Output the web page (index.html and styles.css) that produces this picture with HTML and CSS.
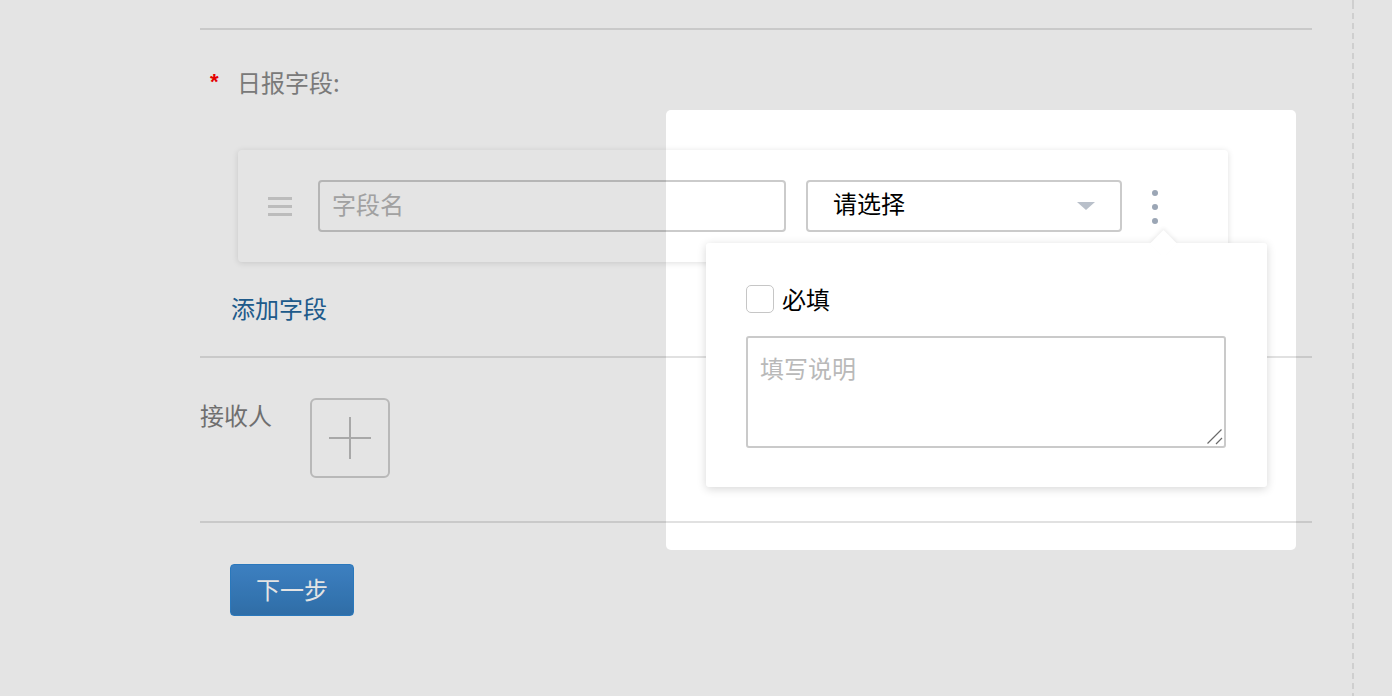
FILE: index.html
```html
<!DOCTYPE html>
<html lang="zh-CN">
<head>
<meta charset="utf-8">
<title>日报设置</title>
<link rel="stylesheet" href="styles.css">
</head>
<body>
<div class="page">
  <main class="main">
    <div class="rule"></div>
    <section class="fields">
      <div class="field-label"><span class="req">*</span><span>日报字段:</span></div>
      <div class="field-card">
        <span class="handle"><i></i><i></i><i></i></span>
        <input class="text-input" type="text" placeholder="字段名">
        <div class="select"><span class="select-text">请选择</span><span class="caret"></span></div>
        <span class="more"><i></i><i></i><i></i></span>
        <div class="popover">
          <label class="check"><span class="box"></span><span>必填</span></label>
          <div class="desc-wrap">
            <textarea class="desc" placeholder="填写说明"></textarea>
            <svg class="grip" width="16" height="16" viewBox="0 0 16 16"><path d="M0.5 14.5L14.5 0.5M9 15L15 9" stroke="#6a6a6a" stroke-width="1.2" fill="none"/></svg>
          </div>
        </div>
      </div>
      <a class="add-field">添加字段</a>
    </section>
    <div class="rule"></div>
    <section class="receivers">
      <span class="recv-label">接收人</span>
      <span class="add-recv">
        <svg width="42" height="42" viewBox="0 0 42 42"><path d="M21 0V42M0 21H42" stroke="#bcbcbc" stroke-width="2" fill="none"/></svg>
      </span>
    </section>
    <div class="rule"></div>
    <div class="actions"><span class="btn-primary">下一步</span></div>
  </main>
  <div class="divider"></div>
</div>
<div class="spotlight"></div>
</body>
</html>
```
FILE: styles.css
```css
* { box-sizing: border-box; }
html, body { margin: 0; height: 100%; }
body {
  background: #fff;
  font-family: "Noto Sans CJK SC", "Noto Sans", sans-serif;
  overflow: hidden;
}
.page { display: flex; height: 696px; }
.main { margin-left: 200px; width: 1112px; padding-top: 28px; }
.rule { height: 2px; background: #e1e1e1; }

.field-label {
  display: flex;
  align-items: center;
  margin-top: 37px;
  height: 30px;
  font-size: 24px;
  line-height: 30px;
  color: #898989;
}
.req {
  width: 37px;
  padding-left: 10px;
  color: #f00;
  font-family: "Liberation Sans", sans-serif;
  font-size: 22px;
  font-weight: bold;
  line-height: 30px;
}

.field-card {
  position: relative;
  display: flex;
  align-items: center;
  margin: 53px 0 0 38px;
  width: 990px;
  height: 112px;
  padding: 0 30px;
  background: #fff;
  border-radius: 4px;
  box-shadow: 0 1px 6px rgba(0, 0, 0, 0.13);
}
.handle { display: flex; flex-direction: column; gap: 5px; width: 24px; margin-right: 26px; }
.handle i { display: block; height: 3px; background: #d3d3d3; }
.text-input {
  width: 468px;
  height: 52px;
  border: 2px solid #cbcbcb;
  border-radius: 4px;
  padding: 0 12px 6px;
  font: 24px/1.2 "Noto Sans CJK SC", sans-serif;
  outline: none;
  background: #fff;
}
.text-input::placeholder { color: #b4b4b4; }
.select {
  display: flex;
  align-items: center;
  justify-content: space-between;
  width: 316px;
  height: 52px;
  margin-left: 20px;
  border: 2px solid #cbcbcb;
  border-radius: 4px;
  padding: 0 25px;
  font-size: 24px;
  line-height: 30px;
  color: #000;
}
.select-text { padding-bottom: 6px; }
.caret {
  width: 0;
  height: 0;
  border-left: 9px solid transparent;
  border-right: 9px solid transparent;
  border-top: 8px solid #b9c0ca;
}
.more { display: flex; flex-direction: column; gap: 8px; margin-left: 30px; margin-top: 1px; }
.more i { display: block; width: 6px; height: 6px; border-radius: 50%; background: #9ba6b5; }

.popover {
  position: absolute;
  left: 468px;
  top: 93px;
  width: 561px;
  height: 244px;
  padding: 42px 40px 0;
  background: #fff;
  border-radius: 3px;
  box-shadow: 0 2px 10px rgba(0, 0, 0, 0.16);
  z-index: 20;
}
.popover::before {
  content: "";
  position: absolute;
  left: 448px;
  top: -9.5px;
  width: 19px;
  height: 19px;
  background: #fff;
  transform: rotate(45deg);
  box-shadow: -2px -2px 4px rgba(0, 0, 0, 0.06);
}
.check {
  position: relative;
  display: flex;
  align-items: center;
  gap: 8px;
  height: 28px;
  font-size: 24px;
  line-height: 30px;
  color: #000;
}
.box {
  width: 28px;
  height: 28px;
  border: 1.5px solid #c6c6c6;
  border-radius: 5px;
  background: #fff;
}
.desc-wrap { position: relative; margin-top: 23px; width: 480px; height: 112px; }
.desc {
  display: block;
  width: 100%;
  height: 100%;
  border: 2px solid #cacaca;
  border-radius: 3px;
  padding: 14px 12px;
  font: 24px/32px "Noto Sans CJK SC", sans-serif;
  outline: none;
  resize: none;
}
.desc::placeholder { color: #b9b9b9; }
.grip { position: absolute; right: 3px; bottom: 3px; }

.add-field {
  display: block;
  margin: 31px 0 0 31px;
  font-size: 24px;
  line-height: 30px;
  color: #23659b;
}
.fields + .rule { margin-top: 33px; }

.receivers { display: flex; align-items: flex-start; padding: 40px 0 43px; }
.recv-label { width: 110px; font-size: 24px; line-height: 34px; color: #7d7d7d; }
.add-recv {
  display: flex;
  align-items: center;
  justify-content: center;
  width: 80px;
  height: 80px;
  border: 2px solid #cecece;
  border-radius: 6px;
}

.actions { padding: 41px 0 0 30px; }
.btn-primary {
  display: flex;
  align-items: center;
  justify-content: center;
  width: 124px;
  height: 52px;
  border: 1px solid #2f87d3;
  border-radius: 4px;
  background: linear-gradient(#448fd8, #357bbb);
  color: #fff;
  font-size: 24px;
  line-height: 30px;
  padding-bottom: 2px;
}

.divider {
  margin-left: 40px;
  width: 2px;
  height: 100%;
  background: repeating-linear-gradient(to bottom, #e8e8e8 0 6px, transparent 6px 10px);
  background-position: 0 3px;
}

.spotlight {
  position: absolute;
  left: 666px;
  top: 110px;
  width: 630px;
  height: 440px;
  border-radius: 5px;
  box-shadow: 0 0 0 3000px rgba(0, 0, 0, 0.106);
  pointer-events: none;
  z-index: 10;
}
```
